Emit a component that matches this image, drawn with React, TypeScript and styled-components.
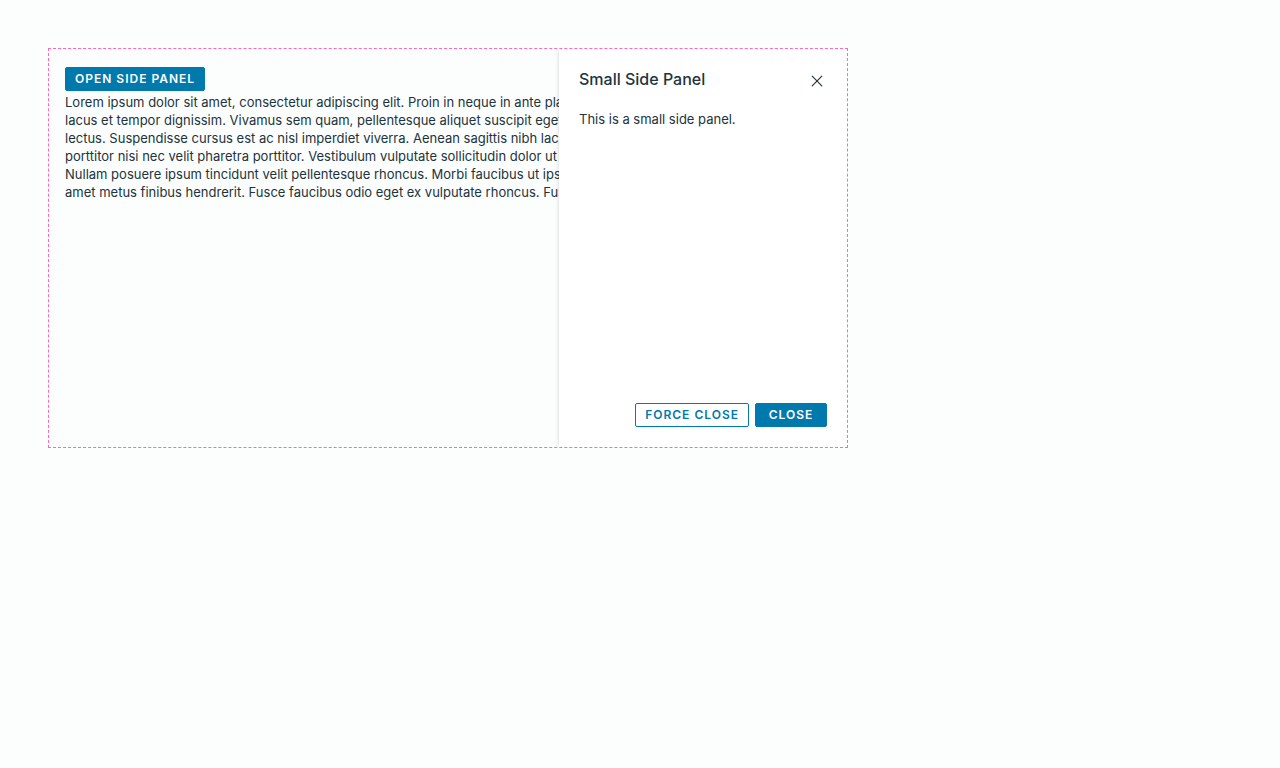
import React, { useState } from "react";
import styled, { createGlobalStyle, css } from "styled-components";

const GlobalStyle = createGlobalStyle`
  *, *::before, *::after {
    box-sizing: border-box;
  }

  body {
    margin: 0;
    background: #fcfefe;
    color: #21333b;
    font-family: Inter, "Open Sans", sans-serif;
    font-size: 13px;
    line-height: 18px;
  }
`;

const Page = styled.main`
  padding: 48px;
`;

const Frame = styled.section`
  position: relative;
  max-width: 800px;
  min-height: 400px;
  overflow: hidden;
  padding: 18px 16px;
  border: 1px dashed #ff69b4;
`;

const Button = styled.button<{ $outline?: boolean }>`
  display: inline-flex;
  align-items: center;
  justify-content: center;
  min-width: 72px;
  height: 24px;
  padding: 0 9px;
  border: 1px solid #0079ad;
  border-radius: 2px;
  font: 600 12px/24px Inter, "Open Sans", sans-serif;
  letter-spacing: 1px;
  white-space: nowrap;
  text-transform: uppercase;
  cursor: pointer;

  ${({ $outline }) =>
    $outline
      ? css`
          background: transparent;
          color: #0079ad;
        `
      : css`
          background: #0079ad;
          color: #ffffff;
        `}
`;

const BodyText = styled.p`
  margin: 2px 0 0;
  white-space: pre;
`;

const Panel = styled.aside`
  position: absolute;
  top: 0;
  right: 0;
  bottom: 0;
  display: flex;
  flex-direction: column;
  width: 288px;
  padding: 20px;
  background: #ffffff;
  box-shadow: 0 0 4px rgba(0, 0, 0, 0.18);
`;

const PanelHeader = styled.header`
  display: flex;
  align-items: flex-start;
  justify-content: space-between;
  height: 24px;
`;

const PanelTitle = styled.h3`
  margin: 0;
  font-size: 16px;
  font-weight: 500;
  line-height: 20px;
`;

const IconButton = styled.button`
  display: flex;
  align-items: center;
  justify-content: center;
  width: 20px;
  height: 24px;
  padding: 0;
  border: 0;
  background: transparent;
  color: #21333b;
  cursor: pointer;
`;

const PanelBody = styled.div`
  flex: 1;
  padding-top: 17px;
`;

const PanelFooter = styled.footer`
  display: flex;
  justify-content: flex-end;
  gap: 6px;
`;

const lines = [
  "Lorem ipsum dolor sit amet, consectetur adipiscing elit. Proin in neque in ante placerat mattis id sed quam. Proin rhoncus",
  "lacus et tempor dignissim. Vivamus sem quam, pellentesque aliquet suscipit eget, pellentesque sed arcu. Vivamus in dui",
  "lectus. Suspendisse cursus est ac nisl imperdiet viverra. Aenean sagittis nibh lacus, in eleifend urna ultrices et. Mauris",
  "porttitor nisi nec velit pharetra porttitor. Vestibulum vulputate sollicitudin dolor ut tincidunt. Phasellus vitae blandit felis.",
  "Nullam posuere ipsum tincidunt velit pellentesque rhoncus. Morbi faucibus ut ipsum at malesuada. Nam vestibulum felis sit",
  "amet metus finibus hendrerit. Fusce faucibus odio eget ex vulputate rhoncus. Fusce nec aliquam leo, at suscipit diam.",
];

export default function App() {
  const [open, setOpen] = useState(true);
  const close = () => setOpen(false);

  return (
    <>
      <GlobalStyle />
      <Page>
        <Frame>
          <Button type="button" onClick={() => setOpen(true)}>
            Open Side Panel
          </Button>
          <BodyText>{lines.join("\n")}</BodyText>
          {open && (
            <Panel aria-labelledby="panel-title">
              <PanelHeader>
                <PanelTitle id="panel-title">Small Side Panel</PanelTitle>
                <IconButton type="button" aria-label="Close panel" onClick={close}>
                  <svg width="12" height="12" viewBox="0 0 12 12" fill="none" stroke="currentColor">
                    <path d="M1.2 1.2 10.8 10.8M10.8 1.2 1.2 10.8" strokeLinecap="round" strokeWidth="1.15" />
                  </svg>
                </IconButton>
              </PanelHeader>
              <PanelBody>This is a small side panel.</PanelBody>
              <PanelFooter>
                <Button type="button" $outline onClick={close}>
                  Force Close
                </Button>
                <Button type="button" onClick={close}>
                  Close
                </Button>
              </PanelFooter>
            </Panel>
          )}
        </Frame>
      </Page>
    </>
  );
}
